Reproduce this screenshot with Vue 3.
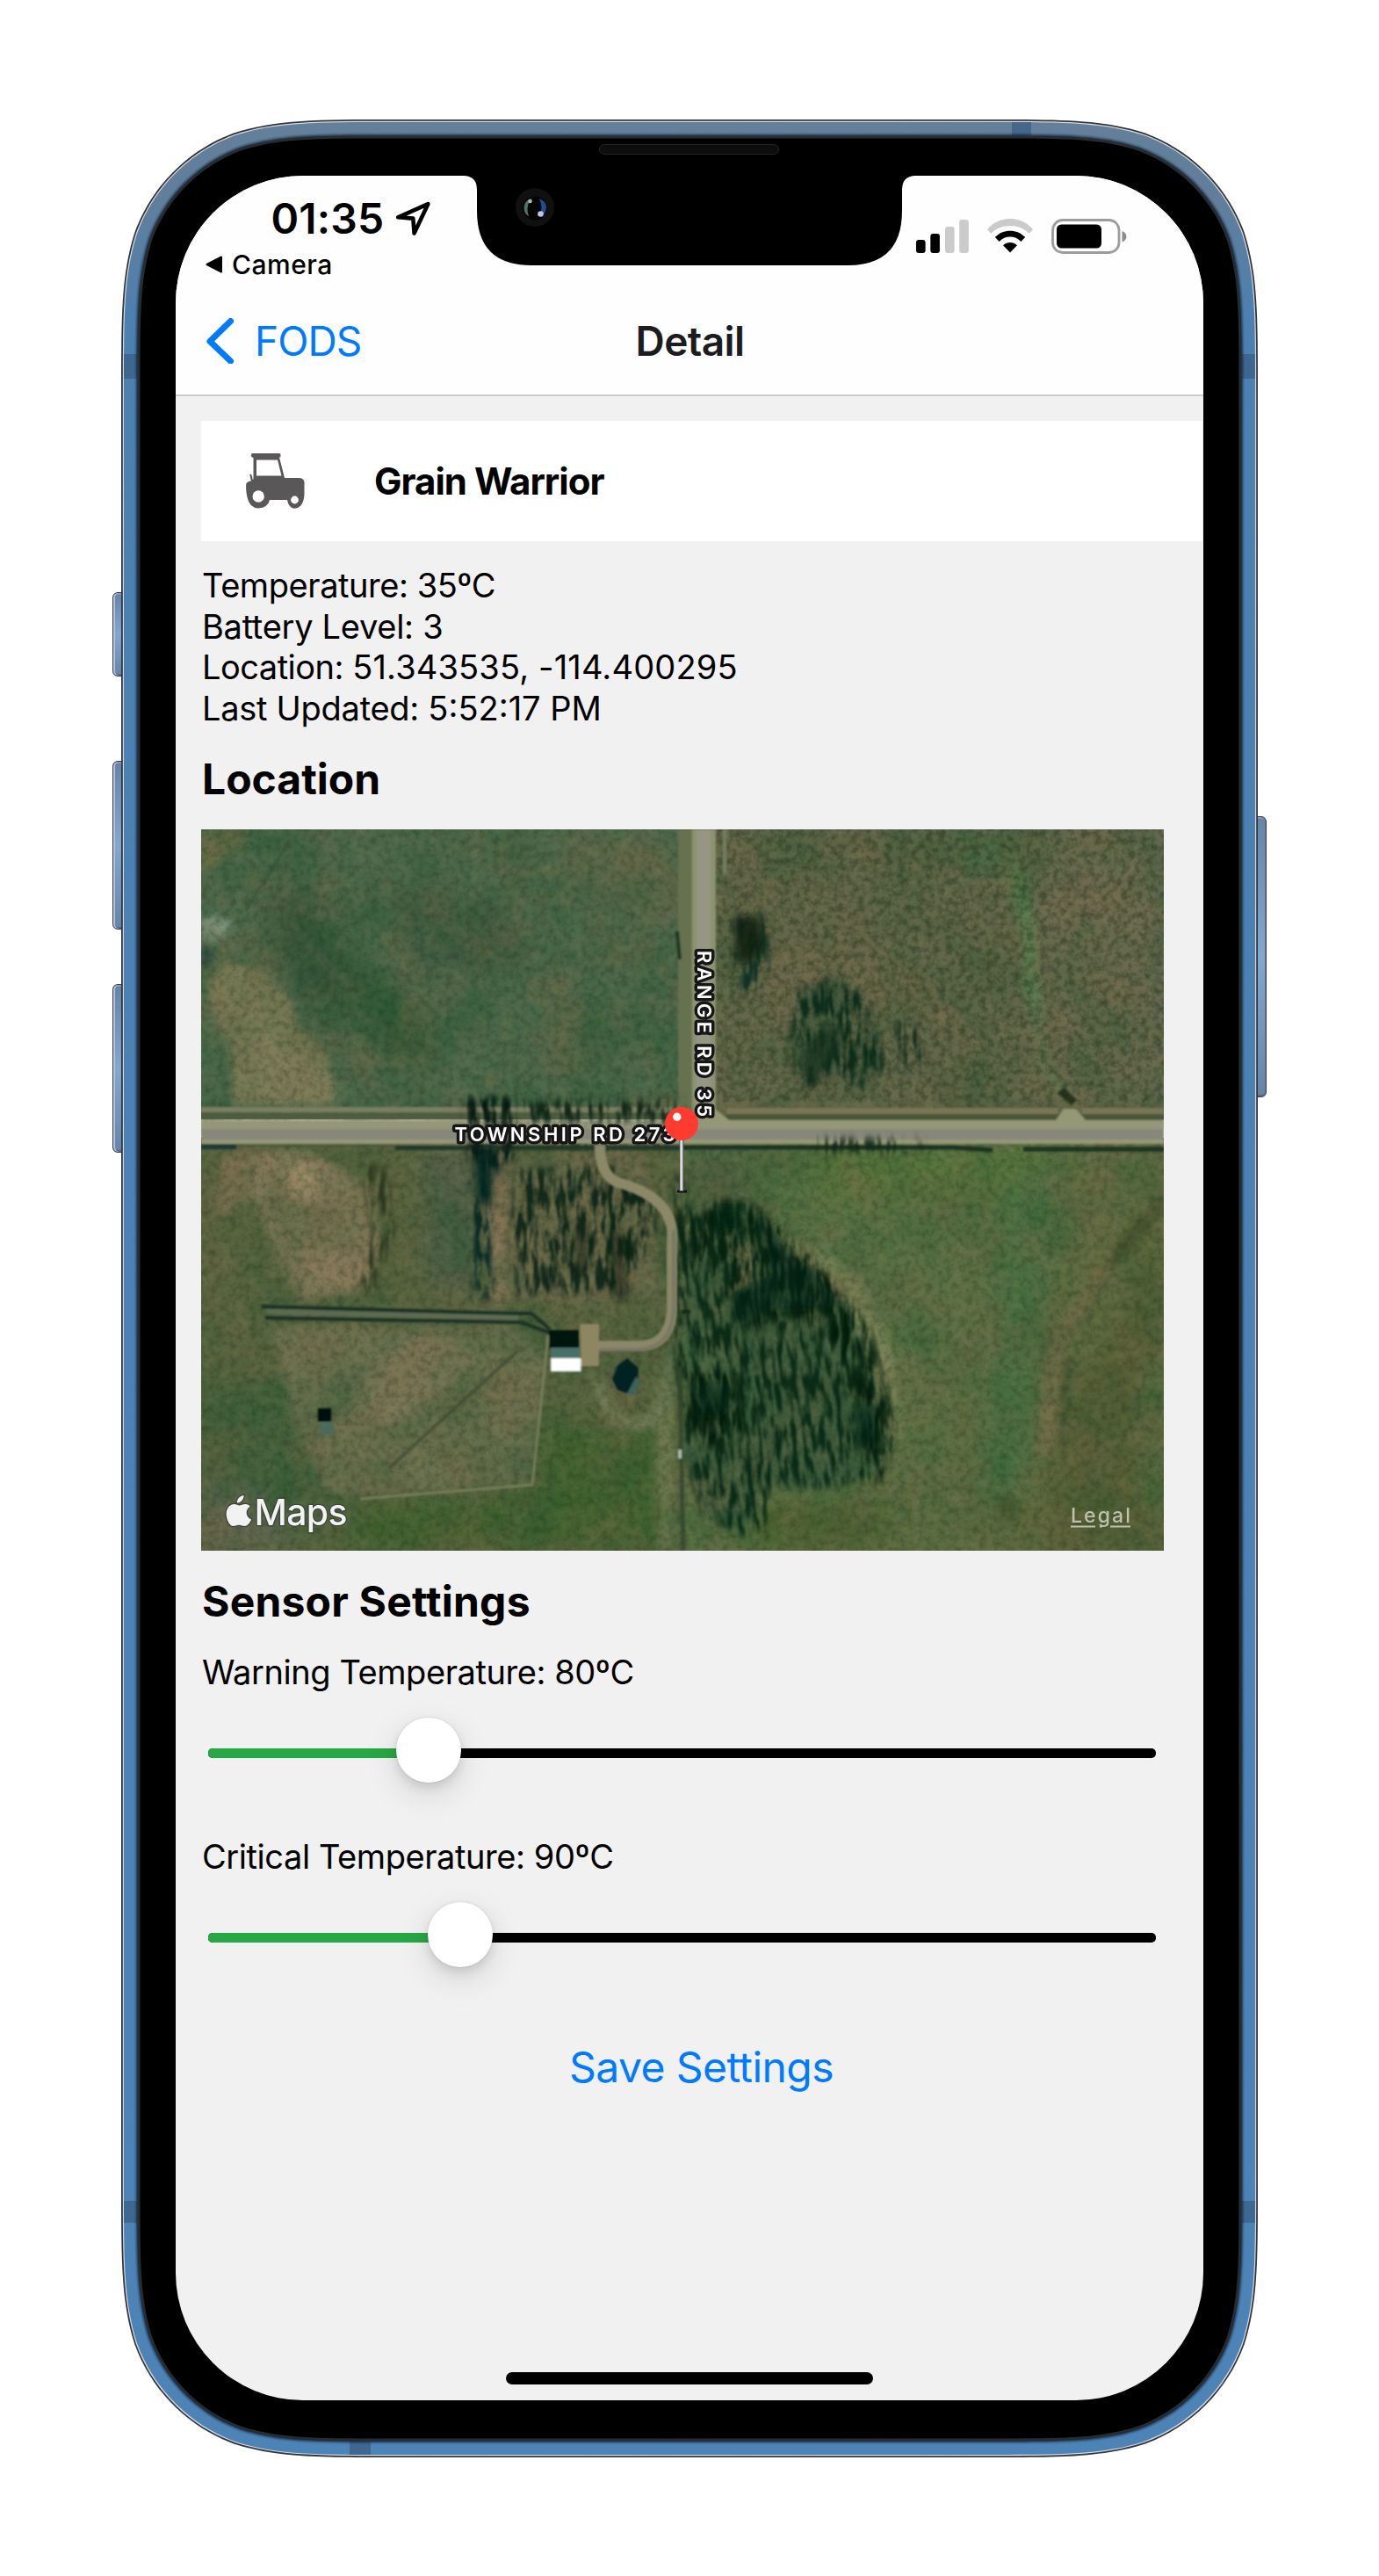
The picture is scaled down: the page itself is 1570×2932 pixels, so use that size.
<script setup>
import { reactive } from 'vue'

const info = [
  { name: 'Temperature', value: '35ºC', kind: 'temp' },
  { name: 'Battery Level', value: '3', kind: 'level' },
  { name: 'Location', value: '51.343535, -114.400295', kind: 'place' },
  { name: 'Last Updated', value: '5:52:17 PM', kind: 'level' },
]

const sliders = reactive([
  { label: 'Warning Temperature', value: 80, offset: 251 },
  { label: 'Critical Temperature', value: 90, offset: 286.5 },
])

// Continuous-curvature rounded rectangle
function squircle(inset, r) {
  const x0 = inset
  const y0 = inset
  const x1 = 1294 - inset
  const y1 = 2661 - inset
  const c = [
    [1.528665, 0], [1.088493, 0], [0.868407, 0], [0.631494, 0.074911],
    [0.372824, 0.169059], [0.169059, 0.372824], [0.074911, 0.631494],
    [0, 0.868407], [0, 1.088493], [0, 1.528665],
  ]
  const f = (pts, fx, fy) => pts.map(([a, b]) => `${fx(a * r).toFixed(2)} ${fy(b * r).toFixed(2)}`)
  const L = (v) => x0 + v
  const R = (v) => x1 - v
  const T = (v) => y0 + v
  const B = (v) => y1 - v
  const rev = [...c].reverse()
  const seg = (p) => `${p[0]}C${p.slice(1).join(' ')}`
  return `M${seg(f(rev, L, T))}L${seg(f(c, R, T))}L${seg(f(rev, R, B))}L${seg(f(c, L, B))}Z`
}
</script>

<template>
  <main class="page">
    <div class="phone">
      <i class="key left k1"></i>
      <i class="key left k2"></i>
      <i class="key left k3"></i>
      <i class="key right k4"></i>
      <svg class="shell" viewBox="0 0 1294 2661">
        <defs>
          <linearGradient id="metal" x1="0" y1="0" x2="0" y2="1">
            <stop offset="0" stop-color="#64809a" />
            <stop offset=".035" stop-color="#607f9b" />
            <stop offset=".085" stop-color="#4a81b2" />
            <stop offset="1" stop-color="#4b84b8" />
          </linearGradient>
          <filter id="grain" x="0" y="0" width="1" height="1">
            <feTurbulence type="fractalNoise" baseFrequency=".45" numOctaves="2" seed="4" />
            <feColorMatrix values="0 0 0 0 .12  0 0 0 0 .2  0 0 0 0 .35  0 0 0 1.2 -.42" />
            <feComposite operator="in" in2="SourceGraphic" />
          </filter>
          <filter id="soft1"><feGaussianBlur stdDeviation="1.5" /></filter>
          <clipPath id="rim"><path :d="squircle(3, 201)" /></clipPath>
        </defs>
        <path :d="squircle(0, 204)" fill="#343436" />
        <path :d="squircle(1.8, 202)" fill="#d5d9e2" />
        <path :d="squircle(3, 201)" fill="url(#metal)" />
        <path :d="squircle(3, 201)" fill="#fff" filter="url(#grain)" opacity=".45" />
        <g clip-path="url(#rim)" fill="#3a5f86" opacity=".75">
          <rect x="0" y="267" width="18" height="28" />
          <rect x="1276" y="267" width="18" height="28" />
          <rect x="0" y="2369" width="18" height="25" />
          <rect x="1276" y="2369" width="18" height="25" />
          <rect x="1014" y="0" width="22" height="18" />
          <rect x="260" y="2643" width="24" height="18" />
        </g>
        <path :d="squircle(17.5, 187)" fill="#0b1b2b" filter="url(#soft1)" />
        <path :d="squircle(19, 186)" fill="#2a2c2e" />
        <path :d="squircle(21.5, 183)" fill="#000" />
        <rect x="544.5" y="28.5" width="204" height="11" rx="5.5" fill="#0d0d0d" stroke="#242424" />
      </svg>

      <section class="screen">
        <header class="top">
          <div class="status">
            <div class="clock">
              <div class="time">
                <span>01:35</span>
                <svg width="42" height="42" viewBox="0 0 42 42">
                  <path d="M38.3 4.2 22.6 37.5 21.3 20.6 4.2 19.3Z" fill="none" stroke="#000" stroke-width="4.6" stroke-linejoin="round" />
                </svg>
              </div>
              <div class="return">
                <svg width="21" height="20" viewBox="0 0 21 20">
                  <path d="M19 1.500v17L2.500 10Z" stroke="#000" stroke-width="2" stroke-linejoin="round" />
                </svg>
                <span>Camera</span>
              </div>
            </div>
            <div class="icons">
              <svg width="60" height="40" viewBox="0 0 60 40">
                <rect x="0" y="24" width="10.6" height="15" rx="3" />
                <rect x="16.3" y="17" width="10.6" height="22" rx="3" />
                <rect x="33" y="9" width="10.6" height="30" rx="3" fill="#cbcbcb" />
                <rect x="49.2" y="1" width="10.6" height="38" rx="3" fill="#cbcbcb" />
              </svg>
              <svg class="wifi" width="52" height="40" viewBox="0 0 52 40">
                <path d="M0 12.2C13-4 39-4 52 12.2l-4.400 4.600C37 5 15 5 4.400 16.800Z" fill="#cbcbcb" />
                <path d="M8.800 21C18 11.200 34 11.200 43.200 21l-4.900 5C31.500 18.800 20.500 18.800 13.700 26Z" />
                <path d="M18 30.200C22.500 26 29.500 26 34 30.200l-8 8.300Z" />
              </svg>
              <svg class="batt" width="86" height="40" viewBox="0 0 86 40">
                <rect x="1.500" y="1.500" width="75.500" height="37" rx="11.500" fill="none" stroke="#9c9c9c" stroke-width="2.800" />
                <rect x="6" y="6.500" width="51" height="27" rx="5.500" />
                <path d="M80.500 14c6.500 2 6.500 10.500 0 12.500Z" fill="#8e8e8e" />
              </svg>
            </div>
          </div>
          <nav class="nav">
            <a class="back">
              <svg width="33" height="52" viewBox="0 0 33 52">
                <path d="M28.500 3.500 5 26.500l23.500 22.500" fill="none" stroke="#007aff" stroke-width="7" stroke-linecap="round" stroke-linejoin="round" />
              </svg>
              <span>FODS</span>
            </a>
            <h1>Detail</h1>
            <span></span>
          </nav>
          <div class="notch">
            <svg viewBox="0 0 512 102" width="512" height="102">
              <path d="M0 0h512q-14 1-14 16v24q0 62-62 62H76Q14 102 14 40V16Q14 1 0 0Z" />
              <circle cx="80" cy="36" r="22" fill="#101010" />
              <ellipse cx="80" cy="37" rx="13.500" ry="13.500" fill="#040404" />
              <path d="M77 26q-11 2-9 14 1 4 5 6-3-9 0-15Z" fill="#4f7462" />
              <path d="M85 26q7 3 8 9 0 10-8 11 5-10 0-20Z" fill="#1f4f92" />
              <circle cx="74.500" cy="29" r="2.300" fill="#a9bab3" />
              <circle cx="86.500" cy="43.500" r="3.300" fill="#c5c5e6" />
            </svg>
          </div>
        </header>

        <div class="body">
          <article class="card">
            <svg width="68" height="63" viewBox="0 0 68 63" fill="#5a5758">
              <path d="M6 1.500Q6 0 7.500 0h30.500q1.500 0 1.500 1.500v1.500q0 1.500-1.500 1.800l6 23.200h16q6 0 6.500 5v14q-.5 8-4 12.500-4 4-9 3-5-1.500-6.500-9.500H27Q25 62 14 62.500 4 62 1.500 50-.5 42 .3 34.500q.3-1.500 3-2.500l2.500-.5q-.8-4-1.500-7.500l1.600-.5q1.500 3 1.600 6h1V5Q6 4.500 6 3Z" />
              <path d="M12 7.500h24l4.500 18H12Z" fill="#fff" />
              <circle cx="14.200" cy="49" r="6.700" fill="#fff" />
              <circle cx="55.500" cy="53" r="4.400" fill="#fff" />
            </svg>
            <strong>Grain Warrior</strong>
          </article>

          <ul class="info">
            <li v-for="row in info" :key="row.name" :class="row.kind">{{ row.name }}: <span>{{ row.value }}</span></li>
          </ul>

          <h2>Location</h2>
          <figure class="map">
            <svg viewBox="229 944 1096 821" width="1096" height="821">
              <defs>
                <filter id="b4" x="-30%" y="-30%" width="160%" height="160%"><feGaussianBlur stdDeviation="5" /></filter>
                <filter id="b12" x="-40%" y="-40%" width="180%" height="180%"><feGaussianBlur stdDeviation="15" /></filter>
                <filter id="b1" x="-10%" y="-10%" width="120%" height="120%"><feGaussianBlur stdDeviation="1.300" /></filter>
                <filter id="dark" x="0" y="0" width="1" height="1" color-interpolation-filters="sRGB">
                  <feTurbulence type="fractalNoise" baseFrequency=".13" numOctaves="4" seed="8" />
                  <feColorMatrix values="0 0 0 0 .1  0 0 0 0 .17  0 0 0 0 .08  2.200 0 0 0 -.85" />
                  <feGaussianBlur stdDeviation=".7" />
                </filter>
                <filter id="light" x="0" y="0" width="1" height="1" color-interpolation-filters="sRGB">
                  <feTurbulence type="fractalNoise" baseFrequency=".06" numOctaves="4" seed="21" />
                  <feColorMatrix values="0 0 0 0 .62  0 0 0 0 .57  0 0 0 0 .4  0 2 0 0 -.85" />
                  <feGaussianBlur stdDeviation=".8" />
                </filter>
                <filter id="broad" x="0" y="0" width="1" height="1" color-interpolation-filters="sRGB">
                  <feTurbulence type="fractalNoise" baseFrequency=".014" numOctaves="4" seed="3" />
                  <feColorMatrix values="0 0 0 0 .13  0 0 0 0 .33  0 0 0 0 .18  2.400 0 0 0 -1" />
                </filter>
                <filter id="brown" x="0" y="0" width="1" height="1" color-interpolation-filters="sRGB">
                  <feTurbulence type="fractalNoise" baseFrequency=".018" numOctaves="4" seed="33" />
                  <feColorMatrix values="0 0 0 0 .48  0 0 0 0 .4  0 0 0 0 .28  0 2.400 0 0 -1" />
                </filter>
                <filter id="trees" x="-10%" y="-10%" width="120%" height="120%" color-interpolation-filters="sRGB">
                  <feTurbulence type="fractalNoise" baseFrequency=".15 .032" numOctaves="4" seed="12" result="n" />
                  <feColorMatrix in="n" values="0 0 0 0 0  0 0 0 0 0  0 0 0 0 0  4.500 0 0 0 -1.900" result="m" />
                  <feGaussianBlur in="SourceGraphic" stdDeviation="5" result="s" />
                  <feComposite in="s" in2="m" operator="in" />
                  <feGaussianBlur stdDeviation="1" />
                </filter>
                <linearGradient id="se" x1="0" x2="1" y1="0" y2=".35">
                  <stop offset="0" stop-color="#567043" />
                  <stop offset=".55" stop-color="#5c7245" />
                  <stop offset="1" stop-color="#5b673d" />
                </linearGradient>
              </defs>

              <!-- fields -->
              <rect x="229" y="944" width="560" height="330" fill="#4a684a" />
              <rect x="789" y="944" width="536" height="330" fill="#616649" />
              <rect x="229" y="1295" width="548" height="470" fill="#56633f" />
              <rect x="777" y="1295" width="548" height="470" fill="url(#se)" />

              <g filter="url(#b12)">
                <path d="M300 1030 350 1010 400 1100 380 1170 330 1130Z" fill="#36543a" />
                <path d="M390 1080 440 1110 500 1190 450 1210 400 1160Z" fill="#2f5836" />
                <path d="M440 1020 560 1020 620 1100 480 1110Z" fill="#3f5c42" />
                <path d="M620 960 770 950 765 1060 690 1040Z" fill="#586848" />
                <path d="M1160 960 1325 944 1325 1250 1230 1240 1190 1100Z" fill="#6b6b4f" />
                <path d="M830 1090 1000 1060 1060 1120 900 1200Z" fill="#6b684c" />
                <path d="M1080 944h80v50h-60Z" fill="#41653f" />
                <path d="M480 1305h70v170h-60Z" fill="#4e5f47" />
                <path d="M229 1600 350 1560 400 1760 300 1765Z" fill="#41603a" />
                <path d="M229 1680h50l60 85H229Z" fill="#606650" />
                <path d="M620 1620H760V1765H380L420 1710 600 1700Z" fill="#41622f" />
                <path d="M780 1310h80v90h-80Z" fill="#465f3d" />
                <path d="M910 1310h280v60H940Z" fill="#55743b" />
                <path d="M1150 1340h50l-20 170-10 190h-50Z" fill="#467043" />
                <path d="M860 1710h150v55H850Z" fill="#49602f" />
                <path d="M1270 1510 1325 1400V1765H1190L1210 1600Z" fill="#565f35" />
                <path d="M1300 1560 1325 1540V1720H1300Z" fill="#47683a" />
              </g>

              <g filter="url(#b4)">
                <path d="M235 1117 256 1093 293 1103 329 1137 340 1170 365 1190 380 1230 384 1257H267L260 1197 242 1143Z" fill="#7d7b58" />
                <path d="M229 995V950l46-6 8 14-33 20Z" fill="#716e4c" />
                <path d="M229 1045q28-6 36 8-14 22-36 18Z" fill="#7a9983" />
                <path d="M229 1077h12l-4 24h-8Z" fill="#0e3a46" />
                <path d="M293 1310h60l70 40 10 70-18 50-75 8-30-60-25-60Z" fill="#86795a" />
                <path d="M325 1325h30l10 40-30 5Z" fill="#9b8b66" />
                <path d="M252 1312h40l-10 60-35 10Z" fill="#746e4e" />
                <path d="M545 1312h190l20 170H560Z" fill="#676749" />
                <path d="M556 1345h20v140h-18Z" fill="#857659" />
                <path d="M310 1510H592l28 34-14 145-195 14-40-4-40-96Z" fill="#6b7050" />
                <path d="M400 1620h50l40-20 60-60-70-20-80 50Z" fill="#787456" />
                <path d="M745 1555h24v210h-20Z" fill="#6b764c" />
                <path d="M680 1570q10 50 45 50t40-80" fill="none" stroke="#707b57" stroke-width="13" />
                <path d="M1270 1410 1235 1470 1190 1530 1182 1660 1200 1650 1218 1520 1256 1450Z" fill="#716d46" />
                <path d="M1325 1355 1270 1415 1258 1450 1290 1425 1325 1380Z" fill="#45522f" />
                <path d="M1217 1545 1208 1640" stroke="#445430" stroke-width="11" />
                <path d="M1262 1450 1230 1510" stroke="#4a5a34" stroke-width="6" />
                <path d="M905 1415 970 1450 1010 1545 1020 1640 1005 1590 975 1490Z" stroke="#7b8458" stroke-width="13" fill="#7b8458" />
                <path d="M1150 972 1168 1040 1178 1150" fill="none" stroke="#5a7a50" stroke-width="18" />
                <path d="M1176 1140 1190 1215 1218 1250" fill="none" stroke="#5c7350" stroke-width="12" />
                <ellipse cx="1147" cy="1718" rx="14" ry="17" fill="#475a32" />
                <path d="M780 1410 814 1372 850 1372 894 1415 966 1485 1000 1580 1010 1670 930 1695 872 1690 845 1745 800 1720 778 1650Z" fill="#3d5c3e" />
                <path d="M845 1415 860 1430 850 1460 830 1475Z" fill="#73774f" />
                <path d="M785 1515 815 1500 825 1550 785 1560Z" fill="#4b6b45" />
                <path d="M905 1130 940 1115 985 1130 1010 1215 985 1240 950 1225 915 1240 900 1190Z" fill="#4d5c42" />
              </g>

              <rect x="229" y="944" width="1096" height="821" filter="url(#broad)" opacity=".36" />
              <rect x="229" y="944" width="1096" height="821" filter="url(#brown)" opacity=".34" />
              <rect x="229" y="944" width="1096" height="821" filter="url(#dark)" opacity=".3" />
              <rect x="229" y="944" width="1096" height="821" filter="url(#light)" opacity=".2" />
              <rect x="789" y="944" width="536" height="310" filter="url(#dark)" opacity=".22" />

              <!-- tree stands -->
              <g filter="url(#trees)">
                <path d="M834 1045q20-18 38 2l4 60-20 30-16-10Z" fill="#0e3226" />
                <path d="M905 1130 940 1115 985 1130 1010 1215 985 1240 950 1225 915 1240 900 1190Z" fill="#0c2c1a" />
                <path d="M1020 1165h28l2 50-22 4Z" fill="#12291c" />
                <path d="M534 1250h46v70l-20 20v140h-20Z" fill="#05241f" />
                <path d="M590 1330 700 1325 715 1470 590 1475 580 1400Z" fill="#12281a" />
                <path d="M690 1330 750 1365 745 1410 700 1480Z" fill="#0d2616" />
                <path d="M600 1285H770l-5 22H600Z" fill="#0c2213" />
                <path d="M410 1320 440 1330 448 1400 425 1470 405 1470 425 1400Z" fill="#2c3720" />
                <path d="M768 1335h14v110h-12Z" fill="#06200f" />
              </g>
              <g filter="url(#trees)" transform="rotate(-5 890 1550)">
                <path d="M770 1385 814 1358 850 1362 868 1374 894 1413 930 1446 966 1483 995 1530 1005 1580 1014 1633 993 1690 920 1697 865 1690 858 1733 828 1745 785 1715 770 1640Z" fill="#0a2a16" />
              </g>
              <g filter="url(#trees)">
                <path d="M777 1400 814 1366 868 1374 930 1446 980 1500 860 1520 840 1500 800 1440Z" fill="#07220f" />
                <path d="M860 1375 930 1440 985 1510 1014 1640 1000 1690 985 1640 975 1560 900 1470Z" fill="#041d0b" stroke="#041d0b" stroke-width="6" />
                <path d="M780 1560 840 1560 850 1640 790 1650Z" fill="#041d0b" />
              </g>
              <g filter="url(#b4)">
                <path d="M836 1048q16-14 32 0l2 30-14 18h-18Z" fill="#0b2010" opacity=".85" />
                <path d="M915 1190 945 1165 958 1175 955 1200 925 1230 912 1225Z" fill="#12301f" opacity=".7" />
                <path d="M537 1295h32l-8 30-2 45h-14Z" fill="#05231d" opacity=".85" />
                <path d="M855 1380 868 1378 895 1425 930 1450 962 1488 880 1490 830 1510 835 1470 880 1450Z" fill="#06210d" opacity=".5" />
                <path d="M785 1575 835 1572 825 1610 790 1612Z" fill="#06210d" opacity=".5" />
                <path d="M815 1372h28v28h-25ZM782 1408h14v24h-14Z" fill="#06210d" opacity=".7" />
                <path d="M975 1590 1000 1600 998 1650 975 1640Z" fill="#06210d" opacity=".5" />
                <path d="M695 1400h14l6 80h-14ZM655 1390h14v60h-12Z" fill="#0b2112" opacity=".6" />
              </g>

              <!-- roads -->
              <g filter="url(#b1)">
                <rect x="772" y="944" width="17" height="320" fill="#66714f" />
                <rect x="788" y="944" width="27" height="350" fill="#8c9270" />
                <rect x="793" y="944" width="16" height="340" fill="#96958400" />
                <rect x="793" y="944" width="16" height="340" fill="#979683" />
                <path d="M825 944v50" stroke="#6f8062" stroke-width="4" />
                <rect x="229" y="1260" width="545" height="6" fill="#7c7e62" />
                <rect x="827" y="1261" width="378" height="7" fill="#787657" />
                <rect x="1232" y="1261" width="93" height="7" fill="#787657" />
                <rect x="229" y="1267" width="560" height="7" fill="#4f5c3f" />
                <rect x="827" y="1268" width="378" height="7" fill="#485637" />
                <rect x="1232" y="1268" width="93" height="7" fill="#485637" />
                <path d="M229 1275H798L814 1262 830 1275H1202L1211 1262H1225L1236 1275H1325V1302H229Z" fill="#949877" />
                <rect x="229" y="1285" width="1096" height="12" fill="#878879" />
                <rect x="229" y="1302" width="40" height="6" fill="#1c3a30" />
                <rect x="269" y="1303" width="180" height="2" fill="#4b553c" />
                <rect x="450" y="1304" width="330" height="5" fill="#20372a" />
                <path d="M778 1306H1085L1130 1309M1165 1308H1325" stroke="#1c3020" stroke-width="5" fill="none" />
                <path d="M683 1303q0 32 18 42 60 16 64 55v90q-2 42-38 42h-62" fill="none" stroke="#8a8868" stroke-width="12" />
                <path d="M767 1400v90q-2 44-40 46h-62" fill="none" stroke="#7a7765" stroke-width="4" />
                <path d="M298 1487 585 1495 605 1495 626 1513M302 1500 593 1505 626 1517" fill="none" stroke="#1c3325" stroke-width="4" />
                <path d="M304 1493 590 1500" stroke="#5d6c55" stroke-width="5" />
                <path d="M443 1671 590 1537" stroke="#414a33" stroke-width="3.500" opacity=".8" />
                <path d="M410 1706 606 1690 624 1520" fill="none" stroke="#767d5a" stroke-width="3" />
                <path d="M330 957 280 1036" stroke="#344d3a" stroke-width="2.500" opacity=".7" />
                <path d="M774 1555 778 1765" stroke="#36472b" stroke-width="5" opacity=".8" />
                <path d="M660 1507h22v48h-20Z" fill="#8e8563" />
                <rect x="625" y="1514" width="34" height="21" fill="#031210" />
                <rect x="627" y="1534" width="33" height="12" fill="#4a7068" />
                <rect x="627" y="1546" width="34.500" height="15" fill="#fff" />
                <path d="M697 1570 703 1554 714 1546 727 1557 726 1572 714 1586 703 1582Z" fill="#062420" />
                <path d="M714 1586 724 1567 729 1572 722 1588Z" fill="#3c6258" />
                <rect x="362" y="1603" width="15" height="15" fill="#04100c" />
                <rect x="364" y="1619" width="16" height="14" fill="#4c6b5c" />
                <path d="M1204 1244 1212 1238 1226 1252 1220 1258Z" fill="#152411" opacity=".8" />
                <path d="M771 1060 774 1092" stroke="#1d3824" stroke-width="4" />
                <path d="M776 1493h10" stroke="#122516" stroke-width="4" />
                <path d="M774 1650v10" stroke="#a8bdb2" stroke-width="4" />
              </g>
              <g filter="url(#trees)">
                <path d="M530 1250h55v70h-50Z" fill="#04180f" />
                <path d="M590 1252h190v26H590Z" fill="#112818" />
                <path d="M930 1296h120v16H930Z" fill="#112818" />
              </g>
              <path d="M539 1262l5 40-4 12ZM573 1246l7 40-11 0Z" fill="#0b2016" opacity=".8" filter="url(#b1)" />

              <!-- labels -->
              <g class="roadname">
                <text x="517.500" y="1298.500" textLength="251">TOWNSHIP RD 273</text>
                <text transform="translate(793.500 1082) rotate(90)" textLength="189">RANGE RD 35</text>
              </g>

              <!-- pin -->
              <path d="M771 1356h11" stroke="#111" stroke-width="3" />
              <path d="M776 1295v61" stroke="#555" stroke-width="5" />
              <path d="M775.800 1295v60" stroke="#dcdcdc" stroke-width="3" />
              <circle cx="776" cy="1279" r="19" fill="#ff3b30" />
              <circle cx="770.800" cy="1271.300" r="4.700" fill="#fff" />

              <!-- attribution -->
              <g class="brand" transform="translate(0 -1.500)">
                <path d="M277.500 1703.500c.4 4.500-3.500 8.700-7.600 8.600-.4-4.300 3.400-8.200 7.600-8.600ZM284.800 1716c-6.300 4-5 12.500 1.300 15-1.500 4-4.800 7.500-7.500 7.500-2.500 0-3.600-1.300-6.600-1.300s-4.200 1.300-6.600 1.300c-4 0-8-8-7.800-14.500.3-6.500 4.600-10.600 9-10.600 2.700 0 4.400 1.500 6 1.500 1.500 0 4-1.700 7-1.500 2.200.1 4 1 5.200 2.600Z" />
                <text x="289.500" y="1737.500" textLength="106">Maps</text>
              </g>
              <g class="legal">
                <text x="1219" y="1733" textLength="68">Legal</text>
                <path d="M1219 1737.500h28M1252 1737.500h3M1264 1737.500h23" stroke="#bcc2ac" stroke-width="2.200" />
              </g>
            </svg>
          </figure>

          <h2 class="settings">Sensor Settings</h2>
          <div v-for="s in sliders" :key="s.label" class="field">
            <label>{{ s.label }}: {{ s.value }}ºC</label>
            <div class="slider">
              <div class="track">
                <div class="fill" :style="{ width: s.offset + 'px' }">
                  <i class="thumb"></i>
                </div>
              </div>
            </div>
          </div>
          <button class="save">Save Settings</button>
        </div>
        <div class="home"></div>
      </section>
    </div>
  </main>
</template>

<style>
body {
  margin: 0;
  background: #fff;
}
</style>

<style scoped>
.page {
  box-sizing: border-box;
  width: 1570px;
  height: 2932px;
  padding: 136px 138px 0;
  background: #fff;
  font-family: Inter, "Liberation Sans", sans-serif;
  color: #000;
  overflow: hidden;
}
.phone {
  position: relative;
  box-sizing: border-box;
  width: 1294px;
  height: 2661px;
  padding: 64px 62px 65px;
}
.shell {
  position: absolute;
  inset: 0;
  width: 1294px;
  height: 2661px;
}
.key {
  position: absolute;
  box-sizing: border-box;
  width: 12px;
  border: 1.5px solid #3b3d4c;
  background: linear-gradient(#6485a8, #82a8ce 50%, #6485a8);
}
.key.left {
  left: -10px;
  border-radius: 6px 0 0 6px;
  box-shadow: inset 2px 0 0 #b4c3dc, inset 0 2px 0 #8795bb, inset 0 -2px 0 #5c6590;
}
.key.right {
  right: -10px;
  border-radius: 0 6px 6px 0;
  box-shadow: inset -1px 0 0 #65789c, inset 0 2px 0 #8795bb, inset 0 -2px 0 #5c6590;
}
.k1 { top: 538px; height: 96px; }
.k2 { top: 730px; height: 192px; }
.k3 { top: 984px; height: 192px; }
.k4 { top: 793px; height: 320px; }

.screen {
  position: relative;
  display: flex;
  flex-direction: column;
  width: 1170px;
  height: 2532px;
  border-radius: 145px;
  background: #f1f1f1;
  overflow: hidden;
}
.top {
  position: relative;
  height: 249px;
  background: #fefefe;
  border-bottom: 2px solid #cbcbcb;
}
.status {
  display: flex;
  justify-content: space-between;
  height: 127px;
}
.clock {
  padding: 20px 0 0 33px;
}
.time {
  display: flex;
  align-items: center;
  gap: 11px;
  padding-left: 75.5px;
  font-size: 48px;
  line-height: 58px;
  font-weight: 600;
  letter-spacing: .2px;
}
.return {
  display: flex;
  align-items: center;
  gap: 10px;
  margin-top: 5px;
  font-size: 30px;
  line-height: 36px;
  font-weight: 500;
  letter-spacing: .5px;
}
.icons {
  display: flex;
  padding: 49px 87px 0 0;
}
.wifi { margin-left: 21px; }
.batt { margin-left: 21px; }
.nav {
  display: grid;
  grid-template-columns: 1fr auto 1fr;
  align-items: center;
  height: 122px;
  padding: 0 33px 0 34px;
  font-size: 46px;
  line-height: 56px;
}
.back {
  display: flex;
  align-items: center;
  gap: 23px;
  color: #007aff;
  letter-spacing: -.9px;
}
.nav h1 {
  margin: 0;
  font-size: 46px;
  font-weight: 600;
  letter-spacing: -.6px;
  color: #1c1c1e;
}
.notch {
  position: absolute;
  top: 0;
  left: 329px;
  width: 512px;
  height: 102px;
}
.notch svg { display: block; }

.body {
  display: flex;
  flex-direction: column;
  padding: 28px 1px 0 29px;
}
.card {
  display: flex;
  align-items: center;
  box-sizing: border-box;
  height: 137px;
  padding-left: 51px;
  background: #fff;
}
.card strong {
  margin-left: 78px;
  font-size: 42px;
  line-height: 52px;
  font-weight: 700;
  letter-spacing: -1px;
}
.info {
  margin: 27px 0 0;
  padding: 0 0 0 1px;
  list-style: none;
  font-size: 38px;
  line-height: 46.67px;
}
.temp { letter-spacing: -.43px; }
.temp span { letter-spacing: -.6px; }
.level { letter-spacing: -.28px; }
.level span { letter-spacing: 0; }
.place { letter-spacing: -.5px; }
.place span { letter-spacing: .15px; }
h2 {
  margin: 28px 0 0 1px;
  font-size: 48px;
  line-height: 58px;
  font-weight: 700;
}
.map {
  width: 1096px;
  height: 821px;
  margin: 28px 0 0;
}
.map svg { display: block; }
.roadname {
  font-size: 22px;
  font-weight: 600;
  fill: #fff;
  stroke: #161616;
  stroke-width: 7px;
  stroke-linejoin: round;
  paint-order: stroke;
}
.brand {
  font-size: 41px;
  font-weight: 500;
  fill: #f2f2f2;
  stroke: #3b4436;
  stroke-width: 2.5px;
  stroke-linejoin: round;
  paint-order: stroke;
}
.legal {
  font-size: 23px;
  font-weight: 500;
  fill: #bcc2ac;
}
.settings {
  margin-top: 29px;
  letter-spacing: .2px;
}
.field {
  margin-top: 28px;
}
.field + .field { margin-top: 61px; }
.field label {
  display: block;
  padding-left: 1px;
  font-size: 38px;
  line-height: 46px;
  letter-spacing: -.43px;
}
.slider {
  height: 74px;
  margin-top: 29px;
  padding: 35px 0 0 8px;
  box-sizing: border-box;
}
.track {
  width: 1079px;
  height: 11px;
  border-radius: 5px;
  background: #000;
}
.fill {
  position: relative;
  height: 11px;
  border-radius: 5px;
  background: #28a745;
}
.thumb {
  position: absolute;
  top: -35px;
  right: -37px;
  width: 74px;
  height: 74px;
  border-radius: 50%;
  background: #fff;
  box-shadow: 0 12px 38px rgba(0, 0, 0, .13), 0 6px 12px rgba(0, 0, 0, .1), 0 0 3px rgba(0, 0, 0, .1);
}
.save {
  align-self: center;
  margin: 85px 0 0 -1px;
  padding: 0;
  border: 0;
  background: none;
  color: #007aff;
  font: 400 48px/58px Inter, "Liberation Sans", sans-serif;
  letter-spacing: -.58px;
}
.home {
  position: absolute;
  left: 376px;
  bottom: 18px;
  width: 418px;
  height: 14px;
  border-radius: 7px;
  background: #000;
}
</style>
